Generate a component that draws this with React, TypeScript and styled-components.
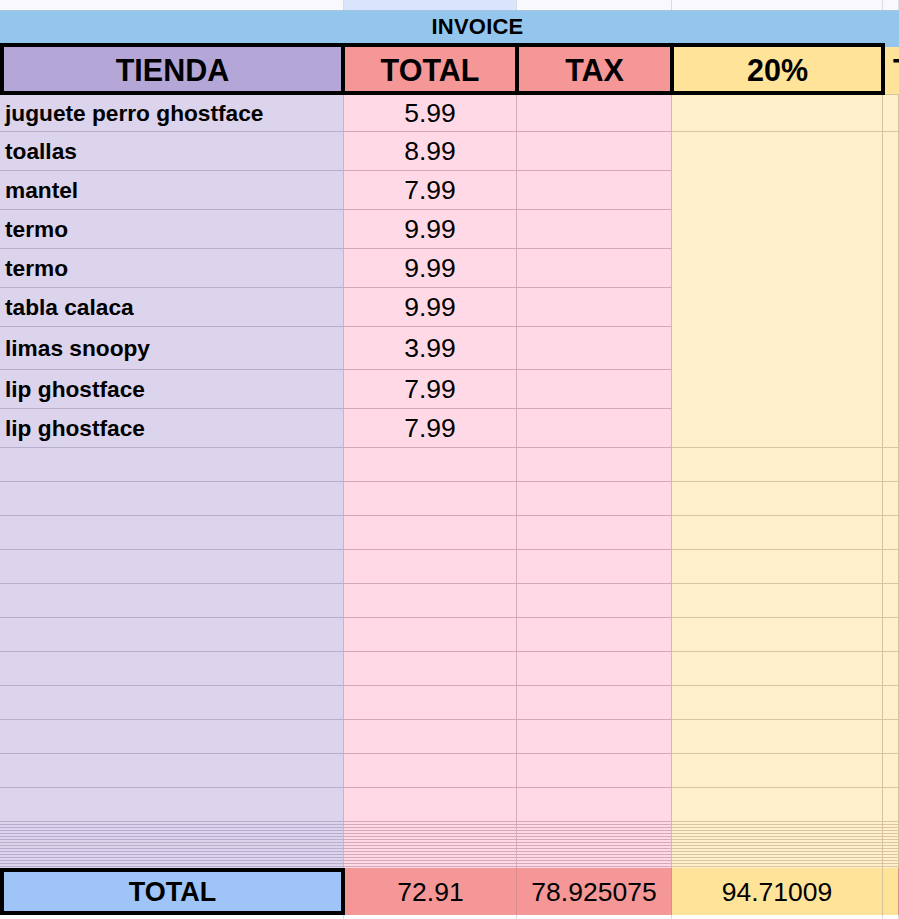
import React from "react";
import styled, { createGlobalStyle } from "styled-components";

const GlobalStyle = createGlobalStyle`
  html, body { margin: 0; padding: 0; background: #ffffff; }
  body { font-family: "Liberation Sans", Arial, sans-serif; color: #000; overflow: hidden; }
`;

type Pal = { bg: string; line: string; vline: string; head: string; total: string; top: string };
const PAL: Pal[] = [
  { bg: "#dcd3ec", line: "#b7adcd", vline: "#c6b5c9", head: "#b4a7d8", total: "#9fc5f8", top: "#f9f9fd" },
  { bg: "#ffdae6", line: "#d3a9b9", vline: "#d3adbd", head: "#f59697", total: "#f59697", top: "#d9e5fc" },
  { bg: "#ffdae6", line: "#d3a9b9", vline: "#d5bba5", head: "#f59697", total: "#f59697", top: "#f9f9fd" },
  { bg: "#fff0cb", line: "#d9c59e", vline: "#d6c09e", head: "#fee399", total: "#fee399", top: "#f9f9fd" },
  { bg: "#fff0cb", line: "#d9c59e", vline: "#d6c09e", head: "#fee399", total: "#fee399", top: "#f9f9fd" },
];
const WIDTHS = [344, 173, 155, 211];
const HEAD_WIDTHS = [345, 178, 159, 215];

const Sheet = styled.div`
  display: flex;
  flex-direction: column;
  width: 100%;
`;

const Row = styled.div<{ $h: number }>`
  display: flex;
  flex: none;
  height: ${(p) => p.$h}px;
`;

const Cell = styled.div<{ $col: number; $noLine?: boolean; $w?: number }>`
  box-sizing: border-box;
  ${(p) =>
    p.$col < 4 ? `width: ${p.$w ?? WIDTHS[p.$col]}px; flex: none;` : `flex: 1; min-width: 0;`}
  height: 100%;
  display: flex;
  align-items: center;
  overflow: hidden;
  white-space: nowrap;
  background: ${(p) => PAL[p.$col].bg};
  border-right: 1px solid ${(p) => PAL[p.$col].vline};
  border-bottom: ${(p) => (p.$noLine ? "none" : `1px solid ${PAL[p.$col].line}`)};
`;

const NameCell = styled(Cell)`
  padding-left: 5px;
  font-weight: 700;
  font-size: 22.7px;
`;

const NumCell = styled(Cell)`
  justify-content: center;
  font-size: 26.5px;
  padding-top: 1px;
`;

const TopCell = styled(Cell)`
  background: ${(p) => PAL[p.$col].top};
  border-right: 1px solid #d9dce6;
  border-bottom: none;
`;

const Banner = styled.div`
  box-sizing: border-box;
  height: 33px;
  flex: none;
  display: flex;
  align-items: center;
  justify-content: center;
  padding-left: 56px;
  background: #94c5ec;
  border-top: 1px solid #a6c6e0;
  font-weight: 700;
  font-size: 22px;
  letter-spacing: 0.2px;
`;

const HeadRow = styled.div`
  display: flex;
  flex: none;
  height: 52px;
  background: #94c5ec;
`;

const HeadCell = styled.div<{ $col: number }>`
  box-sizing: border-box;
  flex: none;
  width: ${(p) => HEAD_WIDTHS[p.$col]}px;
  margin-left: ${(p) => (p.$col === 0 ? 0 : -4)}px;
  border: 4px solid #000;
  background: ${(p) => PAL[p.$col].head};
  display: flex;
  align-items: center;
  justify-content: center;
  font-weight: 700;
  font-size: 30.5px;
  padding-top: 2px;
`;

const HeadTail = styled.div`
  box-sizing: border-box;
  flex: 1;
  min-width: 0;
  margin-top: 4px;
  background: ${PAL[4].head};
  border-bottom: 1px solid ${PAL[4].line};
  display: flex;
  align-items: center;
  padding-left: 8px;
  overflow: hidden;
  white-space: nowrap;
  font-weight: 700;
  font-size: 30.5px;
`;

const CollapsedCell = styled(Cell)`
  background: repeating-linear-gradient(
    to bottom,
    ${(p) => PAL[p.$col].bg} 0px,
    ${(p) => PAL[p.$col].bg} 2px,
    ${(p) => PAL[p.$col].line} 2px,
    ${(p) => PAL[p.$col].line} 3px
  );
  border-bottom: none;
`;

const TotalLabel = styled.div`
  box-sizing: border-box;
  flex: none;
  width: 345px;
  height: 100%;
  border: 4px solid #000;
  background: ${PAL[0].total};
  display: flex;
  align-items: center;
  justify-content: center;
  font-weight: 700;
  font-size: 27px;
  padding-top: 2px;
`;

const TotalCell = styled(Cell)`
  background: ${(p) => PAL[p.$col].total};
  justify-content: center;
  font-size: 26.5px;
  padding-top: 2px;
  border-right-color: ${(p) => (p.$col === 3 ? "#d6c09e" : "#d88f93")};
  border-bottom: none;
`;

const FootCell = styled(Cell)`
  background: #ffffff;
  border-right: 1px solid #dcdcdc;
  border-bottom: none;
`;

const items: { name: string; price: string; h: number }[] = [
  { name: "juguete perro ghostface", price: "5.99", h: 37 },
  { name: "toallas", price: "8.99", h: 39 },
  { name: "mantel", price: "7.99", h: 39 },
  { name: "termo", price: "9.99", h: 39 },
  { name: "termo", price: "9.99", h: 39 },
  { name: "tabla calaca", price: "9.99", h: 39 },
  { name: "limas snoopy", price: "3.99", h: 43 },
  { name: "lip ghostface", price: "7.99", h: 39 },
  { name: "lip ghostface", price: "7.99", h: 39 },
];

const EMPTY_ROWS = 11;

export default function App() {
  const merged = (i: number) => i > 0 && i < items.length - 1;
  return (
    <>
      <GlobalStyle />
      <Sheet>
        <Row $h={10}>
          {[0, 1, 2, 3, 4].map((c) => (
            <TopCell key={c} $col={c} />
          ))}
        </Row>
        <Banner>INVOICE</Banner>
        <HeadRow>
          <HeadCell $col={0}>TIENDA</HeadCell>
          <HeadCell $col={1}>TOTAL</HeadCell>
          <HeadCell $col={2}>TAX</HeadCell>
          <HeadCell $col={3}>20%</HeadCell>
          <HeadTail>TOTAL</HeadTail>
        </HeadRow>
        {items.map((it, i) => (
          <Row $h={it.h} key={i}>
            <NameCell $col={0}>{it.name}</NameCell>
            <NumCell $col={1}>{it.price}</NumCell>
            <Cell $col={2} />
            <Cell $col={3} $noLine={merged(i)} />
            <Cell $col={4} $noLine={merged(i)} />
          </Row>
        ))}
        {Array.from({ length: EMPTY_ROWS }).map((_, i) => (
          <Row $h={34} key={`e${i}`}>
            {[0, 1, 2, 3, 4].map((c) => (
              <Cell key={c} $col={c} />
            ))}
          </Row>
        ))}
        <Row $h={46}>
          {[0, 1, 2, 3, 4].map((c) => (
            <CollapsedCell key={c} $col={c} />
          ))}
        </Row>
        <Row $h={47}>
          <TotalLabel>TOTAL</TotalLabel>
          <TotalCell $col={1} $w={172}>72.91</TotalCell>
          <TotalCell $col={2}>78.925075</TotalCell>
          <TotalCell $col={3}>94.71009</TotalCell>
          <TotalCell $col={4} />
        </Row>
        <Row $h={10}>
          {[0, 1, 2, 3, 4].map((c) => (
            <FootCell key={c} $col={c} />
          ))}
        </Row>
      </Sheet>
    </>
  );
}
